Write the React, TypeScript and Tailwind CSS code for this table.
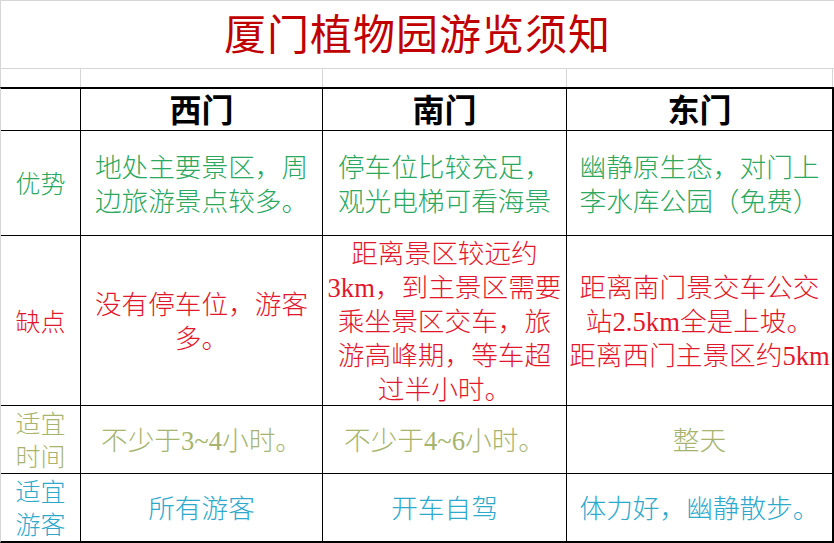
const FONT = "font-['Liberation_Serif','Noto_Sans_CJK_SC',serif]";

type Row = {
  label: string[];
  color: string;
  height: string;
  cells: string[][];
};

const ROWS: Row[] = [
  {
    label: ["优势"],
    color: "text-[#2aa860]",
    height: "h-[105px]",
    cells: [
      ["地处主要景区，周", "边旅游景点较多。"],
      ["停车位比较充足，", "观光电梯可看海景"],
      ["幽静原生态，对门上", "李水库公园（免费）"],
    ],
  },
  {
    label: ["缺点"],
    color: "text-[#e3172c]",
    height: "h-[170px]",
    cells: [
      ["没有停车位，游客", "多。"],
      ["距离景区较远约", "3km，到主景区需要", "乘坐景区交车，旅", "游高峰期，等车超", "过半小时。"],
      ["距离南门景交车公交", "站2.5km全是上坡。", "距离西门主景区约5km"],
    ],
  },
  {
    label: ["适宜", "时间"],
    color: "text-[#a6b46e]",
    height: "h-[68px]",
    cells: [["不少于3~4小时。"], ["不少于4~6小时。"], ["整天"]],
  },
  {
    label: ["适宜", "游客"],
    color: "text-[#2ea9cc]",
    height: "h-[67px]",
    cells: [["所有游客"], ["开车自驾"], ["体力好，幽静散步。"]],
  },
];

// Latin runs keep the regular serif weight; CJK gets the light face
function Line({ text }: { text: string }) {
  const parts = text.split(/([0-9A-Za-z.~]+)/);
  return (
    <span className="whitespace-nowrap">
      {parts.map((p, i) =>
        i % 2 === 1 ? (
          <span key={i} className="font-normal">
            {p}
          </span>
        ) : (
          p
        )
      )}
    </span>
  );
}

function Lines({ lines }: { lines: string[] }) {
  return (
    <div className="flex flex-col items-center pt-[3px]">
      {lines.map((l, i) => (
        <Line key={i} text={l} />
      ))}
    </div>
  );
}

export default function App() {
  return (
    <div className={`w-[834px] h-[543px] overflow-hidden bg-white ${FONT}`}>
      {/* merged title cell */}
      <div className="flex h-[69px] items-center justify-center border-y border-l border-[#d6d6d6]">
        <h1 className="pt-[2px] text-[42px] leading-none tracking-[1px] text-[#c00000]">厦门植物园游览须知</h1>
      </div>

      {/* empty spreadsheet row */}
      <div className="grid h-[18px] grid-cols-[80px_242px_244px_266px] border-l border-[#d6d6d6]">
        <div className="border-r border-[#d6d6d6]" />
        <div className="border-r border-[#d6d6d6]" />
        <div className="border-r border-[#d6d6d6]" />
        <div className="border-r border-[#d6d6d6]" />
      </div>

      {/* table */}
      <div className="grid grid-cols-[80px_242px_244px_265px] border-t-2 border-r-2 border-b-2 border-l border-t-black border-r-black border-b-black border-l-[#d6d6d6]">
        <div className="h-[42px] border-r border-b border-black" />
        {["西门", "南门", "东门"].map((h, i) => (
          <div
            key={h}
            className={`flex h-[42px] items-center justify-center border-b border-black pt-[2px] text-[32px] font-bold leading-none text-black ${
              i < 2 ? "border-r" : ""
            }`}
          >
            {h}
          </div>
        ))}

        {ROWS.map((r, ri) => {
          const last = ri === ROWS.length - 1;
          return [
            <div
              key={`l${ri}`}
              className={`flex ${r.height} items-center justify-center border-r border-black text-[25px] font-light leading-[33px] ${r.color} ${
                last ? "" : "border-b"
              }`}
            >
              <Lines lines={r.label} />
            </div>,
            ...r.cells.map((c, ci) => (
              <div
                key={`c${ri}-${ci}`}
                className={`flex ${r.height} items-center justify-center border-black text-[26.67px] font-light leading-[34px] ${r.color} ${
                  last ? "" : "border-b"
                } ${ci < 2 ? "border-r" : ""}`}
              >
                <Lines lines={c} />
              </div>
            )),
          ];
        })}
      </div>
    </div>
  );
}
